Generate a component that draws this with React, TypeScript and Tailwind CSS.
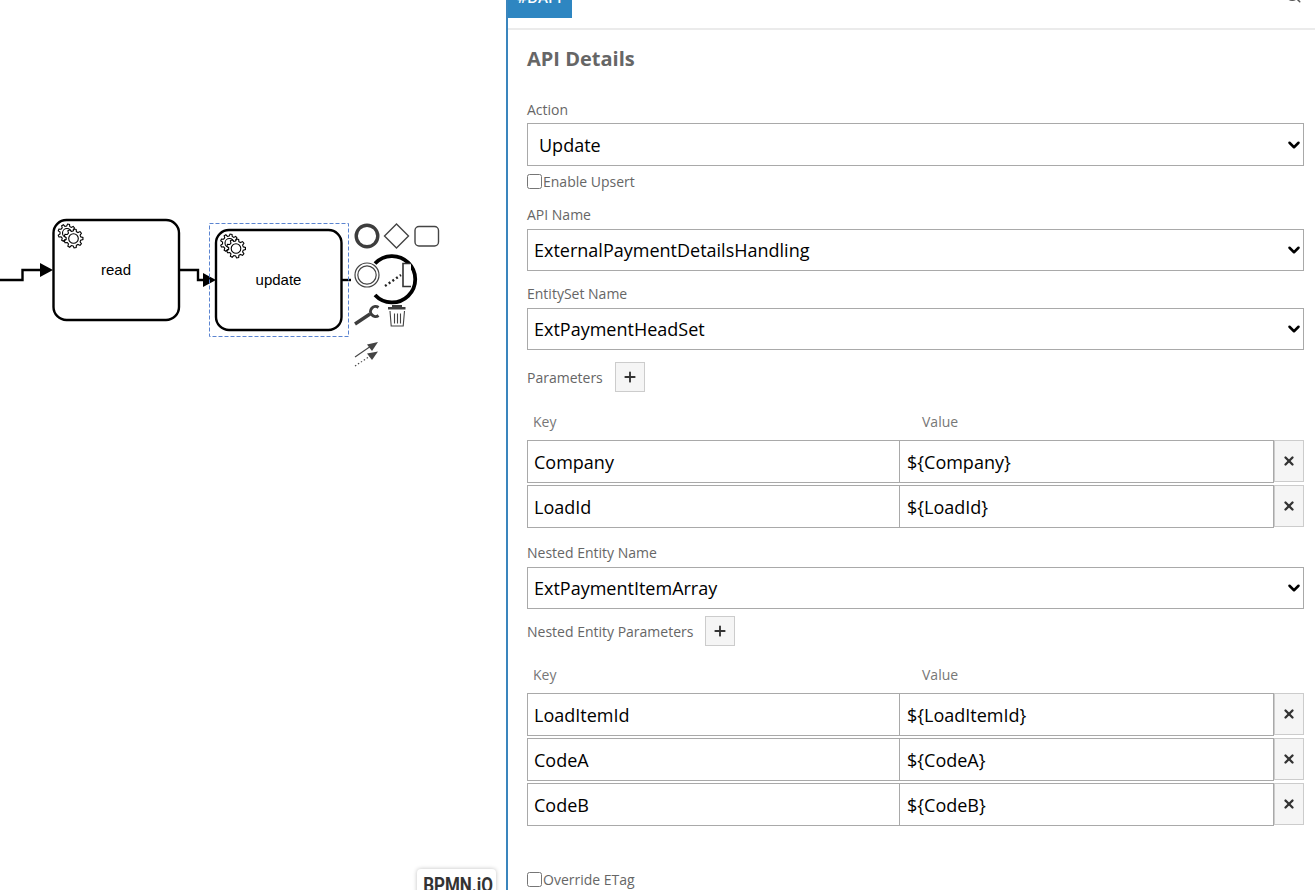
import React from "react";
import { ChevronDown, Plus, Search, X } from "lucide-react";

const gearPath = (cx: number, cy: number, r: number) => {
  // small cog outline
  const pts: string[] = [];
  const teeth = 9;
  for (let i = 0; i < teeth; i++) {
    const a = (i / teeth) * Math.PI * 2;
    const s = (Math.PI * 2) / teeth;
    const list: [number, number][] = [
      [a - s * 0.32, r * 0.78],
      [a - s * 0.16, r],
      [a + s * 0.16, r],
      [a + s * 0.32, r * 0.78],
    ];
    list.forEach(([t, d]) => pts.push(`${(cx + Math.cos(t) * d).toFixed(2)},${(cy + Math.sin(t) * d).toFixed(2)}`));
  }
  return `M${pts.join("L")}Z`;
};

function Gears({ x, y }: { x: number; y: number }) {
  return (
    <g fill="#fff" stroke="#000" strokeWidth="1.1">
      <path d={gearPath(x - 3, y - 3, 9)} />
      <circle cx={x - 3} cy={y - 3} r="4.5" />
      <path d={gearPath(x + 3.5, y + 2.5, 9.5)} />
      <circle cx={x + 3.5} cy={y + 2.5} r="4.8" />
    </g>
  );
}

function Diagram() {
  return (
    <svg width="506" height="890" viewBox="0 0 506 890" className="block">
      <path d="M0 280H22.500V270H42" fill="none" stroke="#000" strokeWidth="2.4" />
      <path d="M40 263L53 270L40 277Z" fill="#000" />
      <rect x="53.500" y="220" width="125.500" height="100" rx="13" fill="#fff" stroke="#000" strokeWidth="2.400" />
      <Gears x={70} y={236} />
      <text x="116" y="275" textAnchor="middle" fontFamily="Liberation Sans, Arial, sans-serif" fontSize="15" fill="#000">read</text>

      <path d="M180 270H198V280H205" fill="none" stroke="#000" strokeWidth="2.4" />
      <path d="M203 273L216 280L203 287Z" fill="#000" />
      <rect x="216" y="230" width="125.500" height="100" rx="13" fill="#fff" stroke="#000" strokeWidth="2.400" />
      <Gears x={232.5} y={246} />
      <text x="278.500" y="285" textAnchor="middle" fontFamily="Liberation Sans, Arial, sans-serif" fontSize="15" fill="#000">update</text>
      <path d="M342 280H351" stroke="#000" strokeWidth="2.4" />
      <rect x="209.500" y="223.500" width="139" height="113" fill="none" stroke="#5b84d0" strokeWidth="1" strokeDasharray="4 2" />

      {/* context pad */}
      <circle cx="367" cy="236" r="10.800" fill="#fff" stroke="#3d3d3d" strokeWidth="3.400" />
      <path d="M396.500 224L408.500 236L396.500 248L384.500 236Z" fill="#fff" stroke="#444" strokeWidth="1.400" />
      <rect x="415" y="226.500" width="23.500" height="19.500" rx="4" fill="#fff" stroke="#444" strokeWidth="1.400" />
      <path d="M375 263.500A23.200 23.200 0 1 1 375 295" fill="none" stroke="#000" strokeWidth="3.800" />
      <circle cx="367" cy="275" r="12" fill="#fff" stroke="#444" strokeWidth="1.200" />
      <circle cx="367" cy="275" r="9.200" fill="#fff" stroke="#444" strokeWidth="1.200" />
      <path d="M385 286L401 275" stroke="#222" strokeWidth="2.400" strokeDasharray="2 2.500" />
      <path d="M411 263.500H403V286.500H411" fill="#fff" stroke="#333" strokeWidth="1.600" />
      <path d="M355 324L370 314" stroke="#3d3d3d" strokeWidth="3.400" />
      <path d="M378.500 307.500A5 5 0 1 0 378.500 315.500" fill="none" stroke="#3d3d3d" strokeWidth="3" />
      <path d="M392 305H402V307H405.500V309.500H388V307H392Z" fill="#3d3d3d" />
      <path d="M390 311L391.200 326H403.200L404.500 311M394.500 313.500V323.500M397.500 313.500V323.500M400.500 313.500V323.500" fill="none" stroke="#444" strokeWidth="1.100" />
      <path d="M355 357L371 346" stroke="#444" strokeWidth="1.100" />
      <path d="M378 342L372 351L367 344.500Z" fill="#444" />
      <path d="M355 366L371 355.500" stroke="#444" strokeWidth="1.100" strokeDasharray="1.500 2" />
      <path d="M378 351.500L372 360L367 353.500Z" fill="#444" />
    </svg>
  );
}

function Label({ children, className = "" }: { children: React.ReactNode; className?: string }) {
  return <div className={`text-[14px] leading-5 text-[#666] ${className}`}>{children}</div>;
}

function Picker({ value, h = "h-[42px]", pad = "pl-[6px]" }: { value: string; h?: string; pad?: string }) {
  return (
    <div className="relative mt-[4px]">
      <select
        defaultValue={value}
        className={`block w-full ${h} ${pad} appearance-none border border-[#a9a9a9] bg-white text-[18px] text-black rounded-none`}
      >
        <option>{value}</option>
      </select>
      <ChevronDown size={18} strokeWidth={3.4} className="absolute right-[1px] top-1/2 -translate-y-1/2 text-black pointer-events-none" />
    </div>
  );
}

function Check({ label, className = "" }: { label: string; className?: string }) {
  return (
    <label className={`flex items-center h-5 text-[14px] text-[#666] ${className}`}>
      <input type="checkbox" className="w-[15px] h-[15px] m-0" />
      <span className="ml-px">{label}</span>
    </label>
  );
}

function AddRow({ label, className = "" }: { label: string; className?: string }) {
  return (
    <div className={`flex items-center ${className}`}>
      <span className="text-[14px] text-[#666]">{label}</span>
      <button className="ml-3 w-[30px] h-[30px] flex items-center justify-center bg-[#f5f5f5] border border-[#ccc] text-[#333]">
        <Plus size={16} strokeWidth={2.8} />
      </button>
    </div>
  );
}

function KvHead({ className = "" }: { className?: string }) {
  return (
    <div className={`flex text-[14px] leading-5 text-[#777] ${className}`}>
      <span className="w-[395px] pl-[6px]">Key</span>
      <span>Value</span>
    </div>
  );
}

function KvRow({ k, v, className = "" }: { k: string; v: string; className?: string }) {
  return (
    <div className={`flex h-[43px] ${className}`}>
      <input readOnly value={k} className="w-[373px] h-full px-[6px] border border-[#a9a9a9] text-[18px] text-black outline-none" />
      <input readOnly value={v} className="w-[375px] -ml-px h-full px-[7px] border border-[#a9a9a9] text-[18px] text-black outline-none" />
      <button className="w-[30px] h-[42px] flex items-center justify-center bg-[#f5f5f5] border border-[#ccc] text-[#333]">
        <X size={14} strokeWidth={4} />
      </button>
    </div>
  );
}

export default function App() {
  return (
    <div className="flex h-[890px] w-[1315px] overflow-hidden bg-white" style={{ fontFamily: '"Open Sans", sans-serif' }}>
      <div className="relative w-[506px] shrink-0">
        <Diagram />
        <div className="absolute left-[417px] top-[869px] w-[79px] h-[30px] pt-[2px] bg-white rounded-sm shadow-[0_0_4px_rgba(0,0,0,0.25)] text-center">
          <span className="inline-block scale-x-[0.85] text-[20px] leading-[28px] font-bold text-[#333]" style={{ fontFamily: '"Roboto", sans-serif' }}>
            BPMN.iO
          </span>
        </div>
      </div>

      <div className="flex-1 border-l-2 border-[#3a85bd] min-w-0">
        <div className="flex justify-between h-[30px] border-b-2 border-[#ebebeb] overflow-hidden">
          <div className="w-[65px] -ml-px h-[18px] bg-[#2e86c1] overflow-hidden text-center">
            <span className="block -mt-[10px] text-[15px] leading-[15px] font-semibold text-white">#DAPI</span>
          </div>
          <Search size={18} strokeWidth={2} className="text-[#555] -mt-[14px] mr-[13px]" />
        </div>

        <div className="pl-[19px] pr-[11px]">
          <h2 className="pt-[15px] text-[20px] leading-7 font-bold text-[#666]">API Details</h2>

          <Label className="mt-[27px]">Action</Label>
          <div className="-mt-px">
            <Picker value="Update" h="h-[43px]" pad="pl-[11px] pt-[1px]" />
          </div>
          <Check label="Enable Upsert" className="mt-[5px]" />

          <Label className="mt-[14px]">API Name</Label>
          <Picker value="ExternalPaymentDetailsHandling" />
          <Label className="mt-[13px]">EntitySet Name</Label>
          <Picker value="ExtPaymentHeadSet" />

          <AddRow label="Parameters" className="mt-[12px]" />
          <KvHead className="mt-[20px]" />
          <KvRow k="Company" v="${Company}" className="mt-[8px]" />
          <KvRow k="LoadId" v="${LoadId}" className="mt-[2px]" />

          <Label className="mt-[15px]">Nested Entity Name</Label>
          <Picker value="ExtPaymentItemArray" />

          <AddRow label="Nested Entity Parameters" className="mt-[7px]" />
          <KvHead className="mt-[19px]" />
          <KvRow k="LoadItemId" v="${LoadItemId}" className="mt-[8px]" />
          <KvRow k="CodeA" v="${CodeA}" className="mt-[2px]" />
          <KvRow k="CodeB" v="${CodeB}" className="mt-[2px]" />

          <Check label="Override ETag" className="mt-[43px]" />
        </div>
      </div>
    </div>
  );
}
